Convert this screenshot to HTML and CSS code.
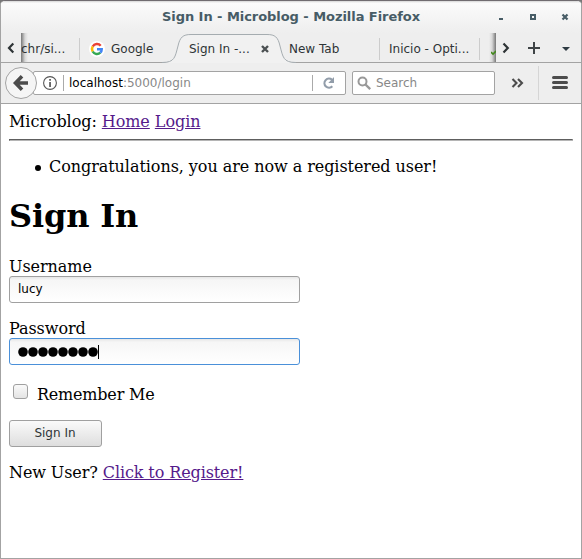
FILE: index.html
```html
<!DOCTYPE html>
<html lang="en">
<head>
<meta charset="utf-8">
<title>Sign In - Microblog</title>
<link rel="stylesheet" href="styles.css">
</head>
<body>
<div class="window">
  <header class="titlebar">
    <span class="window-title">Sign In - Microblog - Mozilla Firefox</span>
    <svg class="window-controls" width="74" height="16" viewBox="0 0 74 16">
      <path d="M4 10h4v2h-4z" fill="#475c66"/>
      <path d="M36 7h4v4h-4z" fill="none" stroke="#475c66" stroke-width="2"/>
      <path d="M67.5 6.5l5 5M72.5 6.5l-5 5" stroke="#475c66" stroke-width="2.2"/>
    </svg>
  </header>
  <nav class="tabs">
    <div class="scroll-left"><svg width="20" height="29"><path d="M12.3 10.5L8 15l4.3 4.5" fill="none" stroke="#2e3436" stroke-width="2.2"/></svg></div>
    <div class="tab tab-first">chr/si...</div>
    <div class="tab tab-google">
      <svg width="16" height="16" viewBox="0 0 16 16">
        <circle cx="8" cy="8" r="8" fill="#fff"/>
        <g fill="none" stroke-width="2.5">
          <path d="M11.7 4.7A4.9 4.9 0 0 0 3.7 5.5" stroke="#ea4335"/>
          <path d="M3.7 5.5a4.9 4.9 0 0 0 0 5" stroke="#fbbc05"/>
          <path d="M3.7 10.5a4.9 4.9 0 0 0 7.6 1.2" stroke="#34a853"/>
          <path d="M8 8.2h4.7q0 2.2-1.4 3.5" stroke="#4285f4"/>
        </g>
      </svg>
      <span>Google</span>
    </div>
    <div class="tab tab-active">
      <svg class="tab-shape" width="134" height="30" viewBox="0 0 134 30">
        <path d="M0 29.5C13 29.5 13 24 16 13C18 4 21 1.5 29 1.5H105C113 1.5 116 4 118 13C121 24 121 29.5 134 29.5V30H0Z" fill="#f1f1f1"/>
        <path d="M0 29.5C13 29.5 13 24 16 13C18 4 21 1.5 29 1.5H105C113 1.5 116 4 118 13C121 24 121 29.5 134 29.5" fill="none" stroke="#a5acb0"/>
      </svg>
      <span>Sign In -...</span>
      <svg width="8" height="8"><path d="M1 1l6 6M7 1L1 7" stroke="#4b5052" stroke-width="2.4"/></svg>
    </div>
    <div class="tab tab-new">New Tab</div>
    <div class="tab tab-inicio">Inicio - Opti...</div>
    <div class="tab-cut"><svg width="5" height="6"><path d="M0 2l2 2 3-3" fill="none" stroke="#42891b" stroke-width="1.6"/></svg></div>
    <svg class="tab-tools" width="85" height="29">
      <path d="M7.5 10.5l4.3 4.5-4.3 4.5" fill="none" stroke="#2e3436" stroke-width="2.2"/>
      <path d="M32 15h12M38 9v12" stroke="#3f4446" stroke-width="2"/>
      <path d="M66 14h8l-4 4z" fill="#2e3b43"/>
    </svg>
  </nav>
  <div class="toolbar">
    <svg class="back" width="32" height="32" viewBox="0 0 32 32">
      <circle cx="16" cy="16" r="15.5" fill="#f5f5f5" stroke="#a3a3a3"/>
      <path d="M23 16H12M17 9.3L10.5 16L17 22.7" fill="none" stroke="#4c4c4c" stroke-width="3.6"/>
    </svg>
    <div class="urlbar">
      <svg class="info" width="16" height="16"><circle cx="8" cy="8" r="6.4" fill="none" stroke="#555" stroke-width="1.1"/><path d="M7.2 4h1.7v1.8H7.2zM7.2 7h1.7v5H7.2z" fill="#555"/></svg>
      <span class="url"><b>localhost</b>:5000/login</span>
      <span class="reload"><svg width="14" height="14"><path d="M10.3 10.2A4.5 4.5 0 1 1 10 3.8" fill="none" stroke="#929daa" stroke-width="2.2"/><path d="M12 1v6H6.3z" fill="#929daa"/></svg></span>
    </div>
    <div class="search">
      <svg width="15" height="15"><circle cx="5.5" cy="5.5" r="4" fill="none" stroke="#999" stroke-width="2"/><path d="M8.5 8.5l4.7 4.7" stroke="#999" stroke-width="2.4"/></svg>
      <span>Search</span>
    </div>
    <svg class="toolbar-tools" width="86" height="40">
      <path d="M17.5 16l4 4-4 4M23 16l4 4-4 4" fill="none" stroke="#4c4c4c" stroke-width="2.1"/>
      <path d="M43.5 3v34" stroke="#d5d5d5"/>
      <path d="M58.5 14.5h13M58.5 19.5h13M58.5 24.5h13" stroke="#4c4c4c" stroke-width="3" stroke-linecap="round"/>
    </svg>
  </div>
  <main class="page">
    <div>Microblog: <a href="#">Home</a> <a href="#">Login</a></div>
    <hr>
    <ul><li>Congratulations, you are now a registered user!</li></ul>
    <h1>Sign In</h1>
    <form>
      <div class="field"><label for="user">Username</label><input class="text" id="user" type="text" value="lucy"></div>
      <div class="field"><label for="pass">Password</label><div class="text focused" id="pass"><svg class="dots" width="81" height="14"><g><circle cx="5" cy="7" r="4.8"/><circle cx="15" cy="7" r="4.8"/><circle cx="25" cy="7" r="4.8"/><circle cx="35" cy="7" r="4.8"/><circle cx="45" cy="7" r="4.8"/><circle cx="55" cy="7" r="4.8"/><circle cx="65" cy="7" r="4.8"/><circle cx="75" cy="7" r="4.8"/></g><path d="M80 0h1v14h-1z"/></svg></div></div>
      <div class="remember"><input type="checkbox" id="rem"><label for="rem">Remember Me</label></div>
      <button type="button">Sign In</button>
    </form>
    <div class="register">New User? <a href="#">Click to Register!</a></div>
  </main>
</div>
</body>
</html>
```
FILE: styles.css
```css
* { box-sizing: border-box; }
body { margin: 0; background: #777; }
.window {
  width: 582px;
  height: 559px;
  border: 1px solid #a3a3a3;
  border-top: 1px solid #706c70;
  border-radius: 5px 5px 0 0;
  background: #fff;
  overflow: hidden;
  font: 12px/16px "DejaVu Sans", sans-serif;
  color: #2e3436;
}
.titlebar {
  height: 32px;
  display: flex;
  justify-content: center;
  align-items: center;
  position: relative;
  background: linear-gradient(#d5d5d5, #fbfbfb 2px, #eee);
}
.window-title { font-size: 13px; letter-spacing: -.05px; font-weight: bold; color: #475c66; }
.window-controls { position: absolute; right: 12px; top: 7px; }
.tabs {
  height: 30px;
  display: flex;
  background: #eee;
  border-bottom: 1px solid #a3a3a3;
}
.scroll-left { width: 20px; height: 29px; flex: none; }
.tab {
  height: 29px;
  display: flex;
  align-items: center;
  flex: none;
  white-space: nowrap;
  padding-top: 2px;
}
.tab-first {
  width: 59px;
  background: linear-gradient(90deg, #777, rgba(150, 150, 150, .25) 4px, transparent 7px);
}
.tab-google { width: 94px; padding-left: 9px; gap: 6px; }
.tab-first::after, .tab-new::after, .tab-inicio::after {
  content: "";
  width: 1px;
  height: 22px;
  margin-left: auto;
  background: #ccc;
}
.tab-active { width: 115px; padding-left: 15px; gap: 11px; position: relative; }
.tab-active > :not(.tab-shape) { position: relative; }
.tab-shape { position: absolute; left: -12px; top: 0; }
.tab-new { width: 91px; }
.tab-inicio { width: 100px; padding-left: 9px; }
.tab-cut {
  width: 16px;
  height: 29px;
  display: flex;
  align-items: flex-end;
  justify-content: flex-end;
  padding-bottom: 6px;
  background: linear-gradient(90deg, transparent 9px, rgba(150, 150, 150, .25) 12px, #777);
}
.tab-tools { flex: none; }
.toolbar {
  height: 41px;
  display: flex;
  align-items: center;
  background: #eee;
  border-bottom: 1px solid #a3a3a3;
}
.back { z-index: 1; margin-left: 4px; position: relative; flex: none; }
.urlbar {
  display: flex;
  align-items: center;
  width: 313px;
  height: 24px;
  margin-left: -4px;
  background: #fff;
  border: 1px solid #a3a3a3;
  border-radius: 2px;
}
.info { margin-left: 8px; }
.url {
  margin-left: 5px;
  padding-left: 5px;
  border-left: 1px solid #aaa;
  color: #888;
}
.url b { font-weight: normal; color: #000; }
.reload {
  display: flex;
  align-items: center;
  height: 16px;
  margin-left: auto;
  padding: 0 9px;
  border-left: 1px solid #aaa;
}
.search {
  display: flex;
  align-items: center;
  gap: 4px;
  width: 143px;
  height: 24px;
  margin-left: 6px;
  padding-left: 4px;
  background: #fff;
  border: 1px solid #a3a3a3;
  border-radius: 2px;
  color: #888;
}
.toolbar-tools { flex: none; }
.page {
  padding: 8px;
  font: 16px/19px "DejaVu Serif", serif;
  letter-spacing: -.06px;
  color: #000;
}
.page a { color: #551a8b; }
hr {
  height: 2px;
  margin: 8px 0 16px;
  border: solid;
  border-width: 1px;
  border-color: #5e5e5e #b5b5b5 #b5b5b5 #5e5e5e;
}
ul { margin: 0; padding-left: 26px; list-style: none; }
li { display: flex; align-items: center; gap: 8px; }
li::before {
  content: "";
  width: 6px;
  height: 6px;
  margin-top: 2px;
  border-radius: 50%;
  background: #000;
}
h1 { margin: 21px 0 22px; font-size: 32px; line-height: 38px; letter-spacing: -.15px; }
form { margin: 0; }
.field { margin-bottom: 16px; }
.field label { display: block; height: 19px; }
.text {
  display: flex;
  align-items: center;
  width: 291px;
  height: 27px;
  margin: 0;
  padding: 0 8px 1px;
  border: 1px solid #a0a0a0;
  border-radius: 3px;
  outline: 0;
  background: linear-gradient(#e6e6e6, #f6f6f6 3px, #fff);
  font: 12px "DejaVu Sans", sans-serif;
  color: #000;
}
.text.focused { border-color: #4a90d9; }
.dots { display: block; margin-top: 1px; }
.remember { display: flex; height: 20px; margin-top: 19px; letter-spacing: -.2px; }
.remember input {
  appearance: none;
  width: 15px;
  height: 15px;
  margin: 0 9px 0 4px;
  border: 1px solid #a0a0a0;
  border-radius: 3px;
  background: linear-gradient(#fafafa, #e4e4e4);
}
.remember label { padding-top: 1px; }
button {
  display: block;
  width: 93px;
  height: 27px;
  margin: 16px 0;
  padding: 0 1px 2px 0;
  border: 1px solid #a0a0a0;
  border-radius: 3px;
  background: linear-gradient(#fafafa, #dedede);
  font: 12px "DejaVu Sans", sans-serif;
  color: #2e3436;
}
.register { letter-spacing: -.1px; }
```
